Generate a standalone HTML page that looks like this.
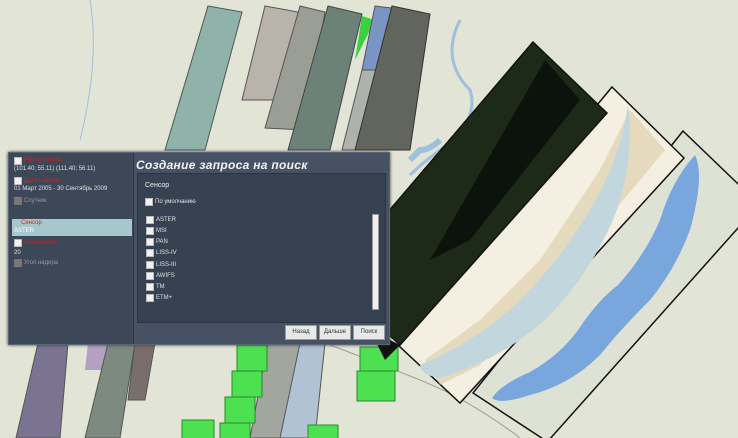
<!DOCTYPE html>
<html><head><meta charset="utf-8"><style>
html,body{margin:0;padding:0}
body{width:738px;height:438px;overflow:hidden;position:relative;background:#e2e4d6;font-family:"Liberation Sans",sans-serif}
svg{position:absolute;left:0;top:0}
.dlg{position:absolute;left:8px;top:152px;width:380px;height:191px;background:#465264;border:1px solid #5a6678;box-shadow:0 0 3px #333}
.left{position:absolute;left:0;top:0;width:124px;height:191px;background:#3c4858;border-right:1px solid #2c3644}
.title{position:absolute;left:127px;top:5px;color:#f2f2f2;font-weight:bold;font-style:italic;font-size:12px;letter-spacing:.3px}
.inner{position:absolute;left:128px;top:20px;width:247px;height:148px;background:#364252;border:1px solid #2a3442}
.t{font-size:6px;color:#e0e0e0;position:absolute;white-space:nowrap}
.r{color:#d82020}
.cb{position:absolute;width:6px;height:6px;background:#f2f2f2;border:1px solid #bbb}
.btn{position:absolute;top:172px;height:13px;background:#e8e8e8;border:1px solid #999;font-size:6px;color:#333;text-align:center;line-height:13px}
</style></head><body>
<svg width="738" height="438" viewBox="0 0 738 438">
<path d="M90 0 Q100 60 80 140" stroke="#9fc0dc" fill="none" stroke-width="1"/>
<path d="M460 20 Q440 60 470 90 Q480 120 440 150 Q420 165 410 175" stroke="#9fc0dc" fill="none" stroke-width="3"/>
<path d="M440 140 Q430 150 420 150 L410 160" stroke="#9fc0dc" fill="none" stroke-width="6"/>
<path d="M330 345 Q370 360 420 380 Q470 400 520 438" stroke="#a09aa0" fill="none" stroke-width="1"/>
<polygon points="208,6 242,12 205,150 165,150" fill="#8fb2aa" stroke="#4a5a52"/>
<polygon points="265,6 298,12 285,100 242,100" fill="#bab3ac" stroke="#555"/>
<polygon points="300,6 325,12 305,130 265,128" fill="#9a9e94" stroke="#555"/>
<polygon points="328,6 362,14 330,150 288,150" fill="#6c8279" stroke="#444"/>
<polygon points="362,16 355,60 375,20" fill="#3ad040"/>
<polygon points="375,6 392,8 380,70 362,70" fill="#7a94c4" stroke="#555"/>
<polygon points="362,70 380,70 370,150 342,150" fill="#aeb2ac" stroke="#555"/>
<polygon points="392,6 430,14 410,150 355,150" fill="#62645e" stroke="#333"/>
<polygon points="38,343 68,343 60,438 16,438" fill="#7a7490" stroke="#555"/>
<polygon points="88,343 110,343 105,370 85,370" fill="#b4a0c0"/>
<polygon points="108,343 135,343 120,438 85,438" fill="#7c8a80" stroke="#555"/>
<polygon points="135,343 155,343 145,400 128,400" fill="#7a6e6a" stroke="#555"/>
<polygon points="268,343 300,343 290,438 250,438" fill="#a2a69e" stroke="#555"/>
<polygon points="300,343 325,343 315,438 280,438" fill="#b0c2d4" stroke="#555"/>
<g fill="#4de050" stroke="#2a8a2a" stroke-width="1">
<rect x="237" y="345" width="30" height="26"/>
<rect x="232" y="371" width="30" height="26"/>
<rect x="225" y="397" width="30" height="26"/>
<rect x="220" y="423" width="30" height="20"/>
<rect x="182" y="420" width="32" height="20"/>
<rect x="308" y="425" width="30" height="16"/>
<rect x="360" y="347" width="38" height="24"/>
<rect x="357" y="371" width="38" height="30"/>
</g>
<polygon points="683,131 760,205 560,450 473,393" fill="#dde2d4" stroke="#111" stroke-width="1.5"/>
<polygon points="738,228 760,230 760,450 540,450" fill="#e2e4d6" stroke="#111" stroke-width="1.5"/>
<path d="M695 155 Q705 175 690 230 Q675 270 650 300 Q620 330 600 355 Q570 385 530 395 Q500 405 492 398 Q500 385 530 372 Q560 355 578 330 Q598 300 618 285 Q645 255 660 220 Q672 180 695 155Z" fill="#7aa6de"/>
<polygon points="612,87 684,158 460,403 398,345" fill="#f4efe0" stroke="#111" stroke-width="1.5"/>
<polygon points="630,110 665,150 590,240 530,310 480,365 440,385 425,360 480,320 540,260 600,170" fill="#d8c8a0" opacity=".55"/>
<path d="M628 105 Q620 160 590 210 Q560 260 520 300 Q480 340 420 365 Q420 375 440 378 Q500 360 545 320 Q590 275 615 215 Q635 160 628 105Z" fill="#c2d6de"/>
<polygon points="533,42 607,113 400,345 330,280" fill="#1e2a18" stroke="#111" stroke-width="1.5"/>
<polygon points="545,60 580,100 470,240 430,260" fill="#0c120c"/>
<polygon points="370,330 400,345 385,360" fill="#111"/>
</svg>
<div class="dlg">
 <div class="left">
  <div class="cb" style="left:5px;top:4px"></div><div class="t r" style="left:15px;top:4px">Район поиска</div>
  <div class="t" style="left:5px;top:13px">(101.40; 55.11) (111.40; 56.11)</div>
  <div class="cb" style="left:5px;top:24px"></div><div class="t r" style="left:15px;top:25px">Дата съёмки</div>
  <div class="t" style="left:5px;top:33px">01 Март 2005 - 30 Сентябрь 2009</div>
  <div class="cb" style="left:5px;top:44px;background:#777;border-color:#777"></div><div class="t" style="left:15px;top:45px;color:#999">Спутник</div>
  <div style="position:absolute;left:3px;top:66px;width:120px;height:17px;background:#a6c8cc"></div>
  <div class="t r" style="left:12px;top:67px">Сенсор</div><div class="t" style="left:5px;top:75px;color:#fff">ASTER</div>
  <div class="cb" style="left:5px;top:86px"></div><div class="t r" style="left:15px;top:87px">Облачность</div>
  <div class="t" style="left:5px;top:97px">20</div>
  <div class="cb" style="left:5px;top:106px;background:#777;border-color:#777"></div><div class="t" style="left:15px;top:107px;color:#999">Угол надира</div>
 </div>
 <div class="title">Создание запроса на поиск</div>
 <div class="inner">
  <div class="t" style="left:7px;top:8px;font-size:7px;color:#eee">Сенсор</div>
  <div class="cb" style="left:7px;top:24px"></div><div class="t" style="left:17px;top:25px">По умолчанию</div>
  <div class="cb" style="left:8px;top:42px"></div><div class="t" style="left:18px;top:43px">ASTER</div>
  <div class="cb" style="left:8px;top:53px"></div><div class="t" style="left:18px;top:54px">MSI</div>
  <div class="cb" style="left:8px;top:64px"></div><div class="t" style="left:18px;top:65px">PAN</div>
  <div class="cb" style="left:8px;top:75px"></div><div class="t" style="left:18px;top:76px">LISS-IV</div>
  <div class="cb" style="left:8px;top:87px"></div><div class="t" style="left:18px;top:88px">LISS-III</div>
  <div class="cb" style="left:8px;top:98px"></div><div class="t" style="left:18px;top:99px">AWIFS</div>
  <div class="cb" style="left:8px;top:109px"></div><div class="t" style="left:18px;top:110px">TM</div>
  <div class="cb" style="left:8px;top:120px"></div><div class="t" style="left:18px;top:121px">ETM+</div>
  <div style="position:absolute;left:234px;top:40px;width:5px;height:94px;background:#f0f0f0;border:1px solid #999"></div>
 </div>
 <div class="btn" style="left:276px;width:30px">Назад</div>
 <div class="btn" style="left:310px;width:30px">Дальше</div>
 <div class="btn" style="left:344px;width:30px">Поиск</div>
</div>
</body></html>
